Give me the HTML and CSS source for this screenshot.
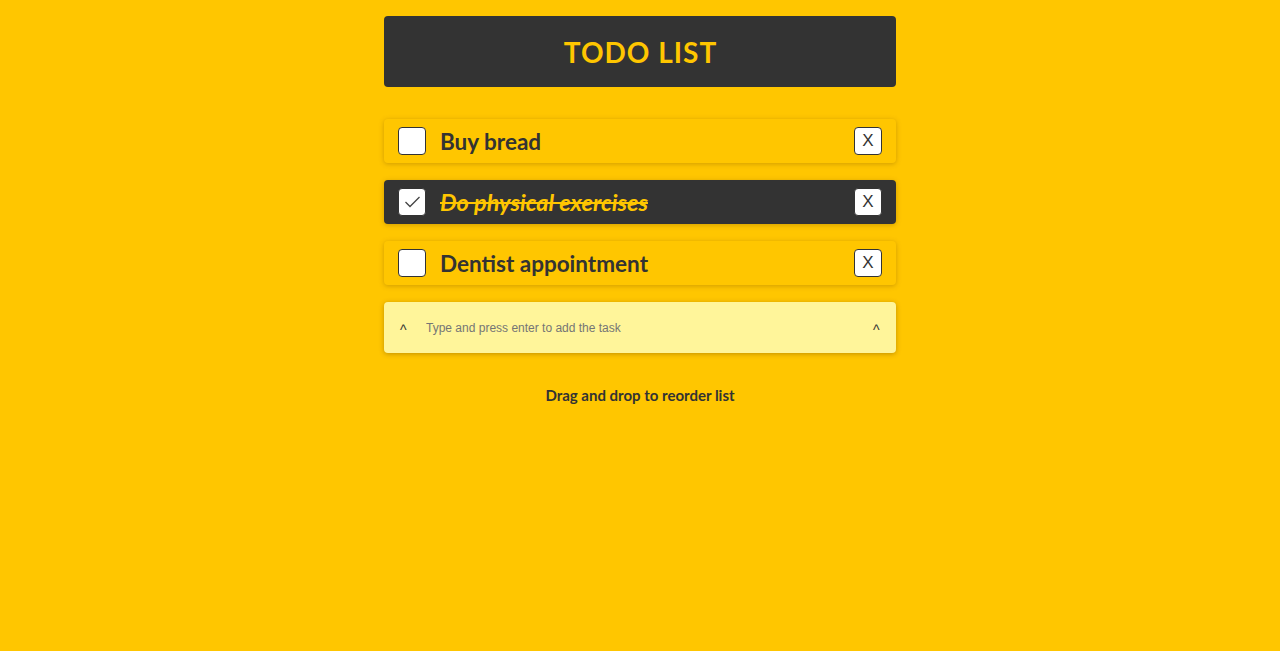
FILE: index.html
```html
<!DOCTYPE html>
<html>
<head>
<meta charset="utf-8">
<link rel="stylesheet" href="styles.css">
</head>
<body>
<div class="app">
  <header class="header"><h1 class="title">TODO LIST</h1></header>
  <ul class="list">
    <li class="item">
      <span class="check"></span>
      <span class="label">Buy bread</span>
      <button class="remove">X</button>
    </li>
    <li class="item done">
      <span class="check"><svg width="26" height="26" viewBox="0 0 26 26"><path d="M6.5 13 L11 17.5 L20.5 8" fill="none" stroke="#444" stroke-width="1.3"/></svg></span>
      <span class="label">Do physical exercises</span>
      <button class="remove">X</button>
    </li>
    <li class="item">
      <span class="check"></span>
      <span class="label">Dentist appointment</span>
      <button class="remove">X</button>
    </li>
  </ul>
  <div class="add">
    <span class="caret">^</span>
    <input class="input" type="text" placeholder="Type and press enter to add the task">
    <span class="caret">^</span>
  </div>
  <p class="hint">Drag and drop to reorder list</p>
</div>
</body>
</html>
```
FILE: styles.css
```css
html, body {
  margin: 0;
  padding: 0;
  background: #ffc600;
  height: 100%;
}
body {
  font-family: Lato, "Open Sans", sans-serif;
  color: #333;
}
.app {
  width: 512px;
  margin: 0 auto;
  padding-top: 16px;
}
.header {
  background: #333;
  border-radius: 4px;
  height: 71px;
  display: flex;
  align-items: center;
  justify-content: center;
}
.title {
  margin: 0;
  color: #ffc600;
  font-size: 28px;
  font-weight: 700;
  letter-spacing: 1px;
  padding-left: 1px;
}
.list {
  list-style: none;
  margin: 32px 0 0;
  padding: 0;
  display: flex;
  flex-direction: column;
  gap: 17px;
}
.item {
  height: 44px;
  border-radius: 4px;
  background: #ffc600;
  box-shadow: 0 1px 5px rgba(120, 80, 0, 0.35);
  display: flex;
  align-items: center;
  padding: 0 14px;
}
.check {
  width: 26px;
  height: 26px;
  border: 1px solid #333;
  border-radius: 4px;
  background: #fff;
  flex: none;
  display: flex;
  align-items: center;
  justify-content: center;
}
.label {
  flex: 1;
  margin-left: 14px;
  font-size: 22.5px;
  font-weight: 700;
  color: #333;
}
.remove {
  width: 28px;
  height: 28px;
  border: 1px solid #333;
  border-radius: 4px;
  background: #fff;
  font-family: "Liberation Sans", Arial, sans-serif;
  font-size: 17px;
  color: #333;
  padding: 0;
  display: flex;
  align-items: center;
  justify-content: center;
}
.item.done {
  background: #333;
}
.item.done .check {
  border-color: #333;
}
.item.done .label {
  color: #ffc600;
  font-style: italic;
  font-size: 23.5px;
  text-decoration: line-through;
  text-decoration-thickness: 2px;
}
.add {
  margin-top: 17px;
  height: 51px;
  border-radius: 4px;
  background: #fff59a;
  box-shadow: 0 1px 5px rgba(120, 80, 0, 0.45);
  display: flex;
  align-items: center;
  padding: 0 13px 0 16px;
}
.caret {
  font-family: "Liberation Sans", Arial, sans-serif;
  font-size: 14px;
  color: #333;
  width: 10px;
  padding-top: 4px;
}
.input {
  flex: 1;
  border: none;
  background: transparent;
  outline: none;
  margin-left: 14px;
  font-family: "Liberation Sans", Arial, sans-serif;
  font-size: 12px;
  color: #333;
}
.input::placeholder {
  color: #757575;
}
.hint {
  margin: 33px 0 0;
  text-align: center;
  font-size: 15px;
  font-weight: 700;
  color: #333;
}
```
